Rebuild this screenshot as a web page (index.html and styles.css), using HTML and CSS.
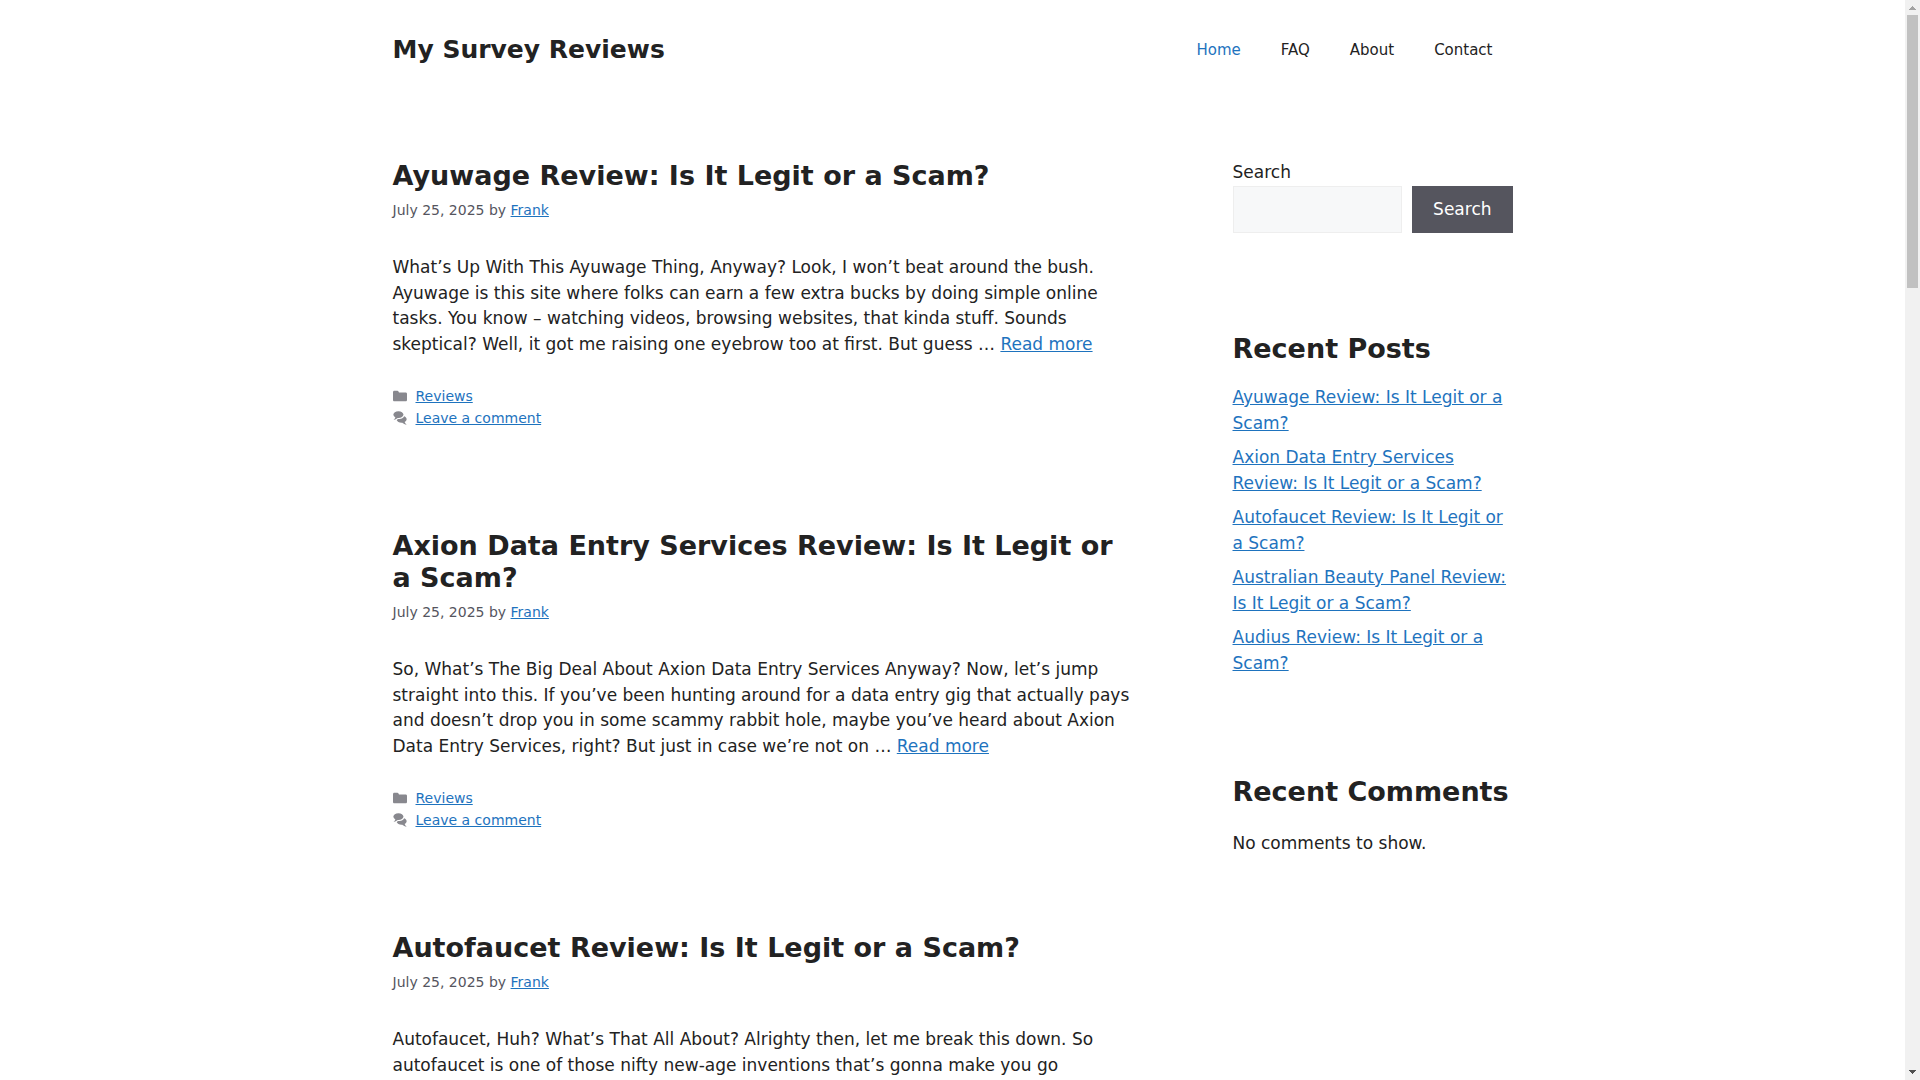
FILE: index.html
```html
<!DOCTYPE html>
<html lang="en">
<head>
  <meta charset="UTF-8">
  <meta name="viewport" content="width=device-width, initial-scale=1.0">
  <title>My Survey Reviews</title>
  <link rel="stylesheet" href="styles.css">
</head>
<body>
  <svg class="sprite" aria-hidden="true">
    <symbol id="icon-folder" viewBox="0 0 512 512">
      <path d="M0 112c0-26.51 21.49-48 48-48h110.014a48 48 0 0143.592 27.907l12.349 26.791A16 16 0 00228.486 128H464c26.51 0 48 21.49 48 48v224c0 26.51-21.49 48-48 48H48c-26.51 0-48-21.49-48-48V112z"/>
    </symbol>
    <symbol id="icon-comments" viewBox="0 0 512 512">
      <path d="M132.838 329.973a435.298 435.298 0 0016.769-9.004c13.363-7.574 26.587-16.142 37.419-25.507 7.544.597 15.27.925 23.098.925 54.905 0 105.634-15.311 143.285-41.28 23.728-16.365 43.115-37.692 54.155-62.645 54.739 22.205 91.498 63.272 91.498 110.286 0 42.186-29.558 79.498-75.09 102.828 23.46 49.216 75.09 101.709 75.09 101.709s-115.837-38.35-154.424-78.46c-9.956 1.12-20.297 1.758-30.793 1.758-88.727 0-162.927-43.071-181.007-100.61z"/>
      <path d="M383.371 132.502c0 70.603-82.961 127.787-185.216 127.787-10.496 0-20.837-.639-30.793-1.757-38.587 40.093-154.424 78.429-154.424 78.429s51.63-52.472 75.09-101.67c-45.532-23.321-75.09-60.619-75.09-102.79C12.938 61.899 95.9 4.716 198.155 4.716c102.255 0 185.216 57.183 185.216 127.786z"/>
    </symbol>
  </svg>
  <div class="window">
    <div class="page">
      <!-- Header -->
      <header class="site-header">
        <p class="site-title"><a href="#">My Survey Reviews</a></p>
        <nav class="main-nav">
          <a class="current" href="#">Home</a>
          <a href="#">FAQ</a>
          <a href="#">About</a>
          <a href="#">Contact</a>
        </nav>
      </header>

      <div class="site-content">
        <!-- Posts -->
        <main class="content-area">
          <article class="post">
            <h2><a href="#">Ayuwage Review: Is It Legit or a Scam?</a></h2>
            <p class="entry-meta"><time datetime="2025-07-25">July 25, 2025</time> by <a href="#">Frank</a></p>
            <p class="entry-summary">What’s Up With This Ayuwage Thing, Anyway? Look, I won’t beat around the bush. Ayuwage is this site where folks can earn a few extra bucks by doing simple online tasks. You know – watching videos, browsing websites, that kinda stuff. Sounds skeptical? Well, it got me raising one eyebrow too at first. But guess … <a href="#">Read more</a></p>
            <footer class="entry-footer">
              <div><svg class="icon"><use href="#icon-folder"/></svg><a href="#">Reviews</a></div>
              <div><svg class="icon"><use href="#icon-comments"/></svg><a href="#">Leave a comment</a></div>
            </footer>
          </article>

          <article class="post">
            <h2><a href="#">Axion Data Entry Services Review: Is It Legit or a Scam?</a></h2>
            <p class="entry-meta"><time datetime="2025-07-25">July 25, 2025</time> by <a href="#">Frank</a></p>
            <p class="entry-summary">So, What’s The Big Deal About Axion Data Entry Services Anyway? Now, let’s jump straight into this. If you’ve been hunting around for a data entry gig that actually pays and doesn’t drop you in some scammy rabbit hole, maybe you’ve heard about Axion Data Entry Services, right? But just in case we’re not on … <a href="#">Read more</a></p>
            <footer class="entry-footer">
              <div><svg class="icon"><use href="#icon-folder"/></svg><a href="#">Reviews</a></div>
              <div><svg class="icon"><use href="#icon-comments"/></svg><a href="#">Leave a comment</a></div>
            </footer>
          </article>

          <article class="post">
            <h2><a href="#">Autofaucet Review: Is It Legit or a Scam?</a></h2>
            <p class="entry-meta"><time datetime="2025-07-25">July 25, 2025</time> by <a href="#">Frank</a></p>
            <p class="entry-summary">Autofaucet, Huh? What’s That All About? Alrighty then, let me break this down. So autofaucet is one of those nifty new-age inventions that’s gonna make you go</p>
          </article>
        </main>

        <!-- Sidebar -->
        <aside class="sidebar">
          <form class="widget" role="search">
            <label for="search">Search</label>
            <div class="search-row">
              <input type="search" id="search">
              <button type="submit">Search</button>
            </div>
          </form>
          <section class="widget">
            <h2>Recent Posts</h2>
            <ul>
              <li><a href="#">Ayuwage Review: Is It Legit or a Scam?</a></li>
              <li><a href="#">Axion Data Entry Services Review: Is It Legit or a Scam?</a></li>
              <li><a href="#">Autofaucet Review: Is It Legit or a Scam?</a></li>
              <li><a href="#">Australian Beauty Panel Review: Is It Legit or a Scam?</a></li>
              <li><a href="#">Audius Review: Is It Legit or a Scam?</a></li>
            </ul>
          </section>
          <section class="widget">
            <h2>Recent Comments</h2>
            <p>No comments to show.</p>
          </section>
        </aside>
      </div>
    </div>

    <!-- Scrollbar -->
    <div class="scrollbar" aria-hidden="true">
      <svg class="arrow" viewBox="0 0 15 15"><path fill="#a3a3a3" d="M7 6h1v1h1v1h1v1h1v1H4V9h1V8h1V7h1z"/></svg>
      <div class="track"><div class="thumb"></div></div>
      <svg class="arrow" viewBox="0 0 15 15"><path fill="#505050" d="M4 5h7v1h-1v1H9v1H8v1H7V8H6V7H5V6H4z"/></svg>
    </div>
  </div>
</body>
</html>
```

FILE: styles.css
```css
/* General Reset */
* {
  box-sizing: border-box;
}

body, h2, p, ul {
  margin: 0;
  padding: 0;
}

body {
  background: #fff;
  color: #222;
  font-family: "DejaVu Sans", sans-serif;
  font-size: 17px;
  line-height: 1.5;
}

a {
  color: #1e73be;
}

h2 {
  font-size: 27px;
  line-height: 32px;
}

.sprite {
  display: none;
}

/* Window */
.window {
  display: flex;
  height: 100vh;
}

.page {
  flex: 1;
  min-width: 0;
  overflow: hidden;
}

/* Header */
.site-header {
  display: flex;
  align-items: center;
  justify-content: space-between;
  max-width: 1200px;
  margin: 0 auto;
  padding: 20px 40px;
}

.site-title {
  font-size: 25px;
  font-weight: bold;
}

.site-title a,
.post h2 a {
  color: #222;
  text-decoration: none;
}

.main-nav {
  display: flex;
}

.main-nav a {
  padding: 0 20px;
  color: #222;
  font-size: 15px;
  line-height: 60px;
  text-decoration: none;
}

.main-nav .current {
  color: #1e73be;
}

/* Layout */
.site-content {
  display: flex;
  gap: 100px;
  max-width: 1200px;
  margin: 0 auto;
  padding: 60px 40px;
}

.content-area {
  flex: 1;
  min-width: 0;
}

.sidebar {
  width: 25%;
}

/* Posts */
.post {
  margin-bottom: 101px;
}

.entry-meta,
.entry-footer {
  color: #55555e;
  font-size: 14px;
  line-height: 22px;
}

.entry-meta {
  margin-top: 7px;
}

.entry-summary {
  margin-top: 34px;
}

.entry-footer {
  margin-top: 28px;
}

.entry-footer div {
  display: flex;
  align-items: center;
  gap: 9px;
}

.icon {
  width: 14px;
  height: 14px;
  fill: #88888e;
}

/* Sidebar */
.widget {
  margin-bottom: 100px;
}

.widget h2 {
  margin-bottom: 20px;
}

.widget p {
  padding-top: 3px;
}

.widget label {
  display: block;
}

.widget ul {
  list-style: none;
}

.widget li + li {
  margin-top: 9px;
}

.search-row {
  display: flex;
  gap: 10px;
}

.search-row input {
  flex: 1;
  min-width: 0;
  padding: 10px 15px;
  border: 1px solid #eee;
  border-radius: 0;
  background: #f7f8f9;
  font: inherit;
}

.search-row button {
  padding: 10px 21px;
  border: 0;
  background: #55555e;
  color: #fff;
  font: inherit;
}

/* Scrollbar */
.scrollbar {
  display: flex;
  flex-direction: column;
  width: 15px;
  background: #f1f1f1;
}

.arrow {
  width: 15px;
  height: 15px;
}

.track {
  flex: 1;
  padding: 0 2px;
}

.thumb {
  height: 26%;
  background: #c1c1c1;
}
```
